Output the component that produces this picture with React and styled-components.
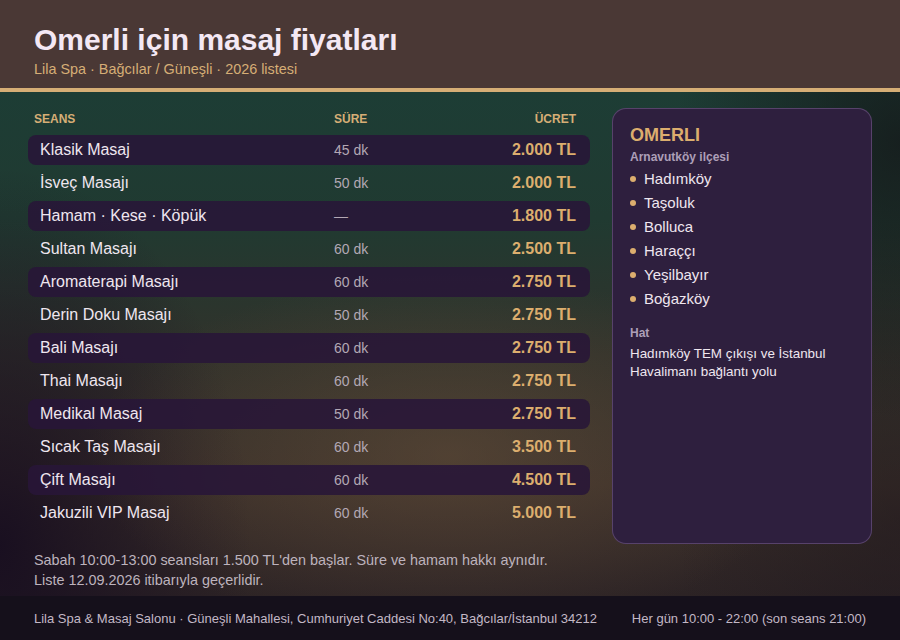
import React from "react";
import styled, { createGlobalStyle } from "styled-components";

const Global = createGlobalStyle`
  html, body { margin: 0; padding: 0; }
  body { font-family: "Liberation Sans", Arial, sans-serif; background: #15101b; }
  * { box-sizing: border-box; }
`;

const Page = styled.div`
  width: 900px;
  height: 640px;
  display: flex;
  flex-direction: column;
  overflow: hidden;
`;

const Header = styled.header`
  background: #4a3835;
  border-bottom: 4px solid #d6ae76;
  padding: 23px 34px 10px;
  height: 92px;
`;

const Title = styled.h1`
  margin: 0;
  font-size: 30px;
  line-height: 34px;
  font-weight: 700;
  color: #f4e8f4;
`;

const Subtitle = styled.div`
  margin-top: 3px;
  font-size: 14.4px;
  line-height: 18px;
  color: #d6ae76;
`;

const Main = styled.main`
  flex: 1;
  display: flex;
  flex-direction: column;
  padding: 16px 28px 6px;
  background:
    radial-gradient(ellipse 50% 45% at 50% 72%, rgba(105, 82, 60, 0.5), rgba(105, 82, 60, 0) 80%),
    radial-gradient(ellipse 28% 75% at 0% 90%, rgba(24, 14, 32, 0.95), rgba(24, 14, 32, 0) 100%),
    radial-gradient(ellipse 25% 55% at 100% 10%, rgba(20, 22, 24, 0.75), rgba(20, 22, 24, 0) 100%),
    radial-gradient(ellipse 25% 60% at 100% 85%, rgba(30, 22, 28, 0.5), rgba(30, 22, 28, 0) 100%),
    linear-gradient(180deg, #1d3d35 0%, #203a31 25%, #31322b 52%, #3a2f29 78%, #2c2325 100%);
`;

const Content = styled.div`
  flex: 1;
  display: grid;
  grid-template-columns: 562px 260px;
  gap: 22px;
`;

const Table = styled.div`
  display: flex;
  flex-direction: column;
  gap: 3px;
`;

const HeadRow = styled.div`
  display: grid;
  grid-template-columns: 300px 1fr auto;
  padding: 0 14px 0 6px;
  line-height: 20px;
  margin: 1px 0 3px;
  font-size: 12px;
  font-weight: 700;
  color: #d6ae76;
  text-transform: uppercase;
`;

const HeadCell = styled.div`
  text-align: ${(p) => (p.$right ? "right" : "left")};
`;

const Row = styled.div`
  display: grid;
  grid-template-columns: 294px 1fr auto;
  align-items: center;
  height: 30px;
  padding: 0 14px 0 12px;
  border-radius: 8px;
  background: ${(p) => (p.$striped ? "rgba(40, 22, 56, 0.88)" : "transparent")};
`;

const Name = styled.div`
  font-size: 16px;
  color: #efe6ef;
`;

const Duration = styled.div`
  font-size: 14px;
  color: #b3a8b4;
`;

const Price = styled.div`
  font-size: 16px;
  font-weight: 700;
  color: #dcae6e;
  text-align: right;
`;

const Panel = styled.aside`
  background: #2e1f3e;
  border: 1px solid rgba(150, 120, 175, 0.4);
  border-radius: 14px;
  padding: 15px 17px;
`;

const PanelTitle = styled.div`
  font-size: 18px;
  line-height: 22px;
  font-weight: 700;
  color: #dcae6e;
`;

const PanelLabel = styled.div`
  font-size: 12px;
  line-height: 16px;
  font-weight: 700;
  color: #ad9fb8;
  margin-top: ${(p) => p.$mt || 0}px;
`;

const List = styled.ul`
  list-style: none;
  margin: 1px 0 0;
  padding: 0;
`;

const Item = styled.li`
  display: flex;
  align-items: center;
  gap: 8px;
  height: 24px;
  font-size: 15px;
  color: #efe6ef;
  &::before {
    content: "";
    width: 6px;
    height: 6px;
    border-radius: 50%;
    background: #dcae6e;
    flex: none;
    margin-top: 2px;
  }
`;

const PanelText = styled.p`
  margin: 4px 0 0;
  font-size: 13.4px;
  line-height: 18px;
  color: #efe6ef;
`;

const Notes = styled.div`
  margin-top: 6px;
  padding-left: 6px;
  font-size: 14.4px;
  line-height: 20px;
  color: #bdb3bd;
`;

const Footer = styled.footer`
  height: 44px;
  flex: none;
  background: #15101b;
  display: flex;
  align-items: center;
  justify-content: space-between;
  padding: 0 34px;
  font-size: 13px;
  color: #c3b8c6;
`;

const rows = [
  ["Klasik Masaj", "45 dk", "2.000 TL"],
  ["İsveç Masajı", "50 dk", "2.000 TL"],
  ["Hamam · Kese · Köpük", "—", "1.800 TL"],
  ["Sultan Masajı", "60 dk", "2.500 TL"],
  ["Aromaterapi Masajı", "60 dk", "2.750 TL"],
  ["Derin Doku Masajı", "50 dk", "2.750 TL"],
  ["Bali Masajı", "60 dk", "2.750 TL"],
  ["Thai Masajı", "60 dk", "2.750 TL"],
  ["Medikal Masaj", "50 dk", "2.750 TL"],
  ["Sıcak Taş Masajı", "60 dk", "3.500 TL"],
  ["Çift Masajı", "60 dk", "4.500 TL"],
  ["Jakuzili VIP Masaj", "60 dk", "5.000 TL"],
];

const areas = ["Hadımköy", "Taşoluk", "Bolluca", "Haraççı", "Yeşilbayır", "Boğazköy"];

export default function App() {
  return (
    <Page>
      <Global />
      <Header>
        <Title>Omerli için masaj fiyatları</Title>
        <Subtitle>Lila Spa · Bağcılar / Güneşli · 2026 listesi</Subtitle>
      </Header>
      <Main>
        <Content>
          <Table>
            <HeadRow>
              <HeadCell>Seans</HeadCell>
              <HeadCell>Süre</HeadCell>
              <HeadCell $right>Ücret</HeadCell>
            </HeadRow>
            {rows.map(([n, d, p], i) => (
              <Row key={n} $striped={i % 2 === 0}>
                <Name>{n}</Name>
                <Duration>{d}</Duration>
                <Price>{p}</Price>
              </Row>
            ))}
          </Table>
          <Panel>
            <PanelTitle>OMERLI</PanelTitle>
            <PanelLabel $mt={3}>Arnavutköy ilçesi</PanelLabel>
            <List>
              {areas.map((a) => (
                <Item key={a}>{a}</Item>
              ))}
            </List>
            <PanelLabel $mt={15}>Hat</PanelLabel>
            <PanelText>Hadımköy TEM çıkışı ve İstanbul Havalimanı bağlantı yolu</PanelText>
          </Panel>
        </Content>
        <Notes>
          Sabah 10:00-13:00 seansları 1.500 TL'den başlar. Süre ve hamam hakkı aynıdır.
          <br />
          Liste 12.09.2026 itibarıyla geçerlidir.
        </Notes>
      </Main>
      <Footer>
        <span>Lila Spa &amp; Masaj Salonu · Güneşli Mahallesi, Cumhuriyet Caddesi No:40, Bağcılar/İstanbul 34212</span>
        <span>Her gün 10:00 - 22:00 (son seans 21:00)</span>
      </Footer>
    </Page>
  );
}
